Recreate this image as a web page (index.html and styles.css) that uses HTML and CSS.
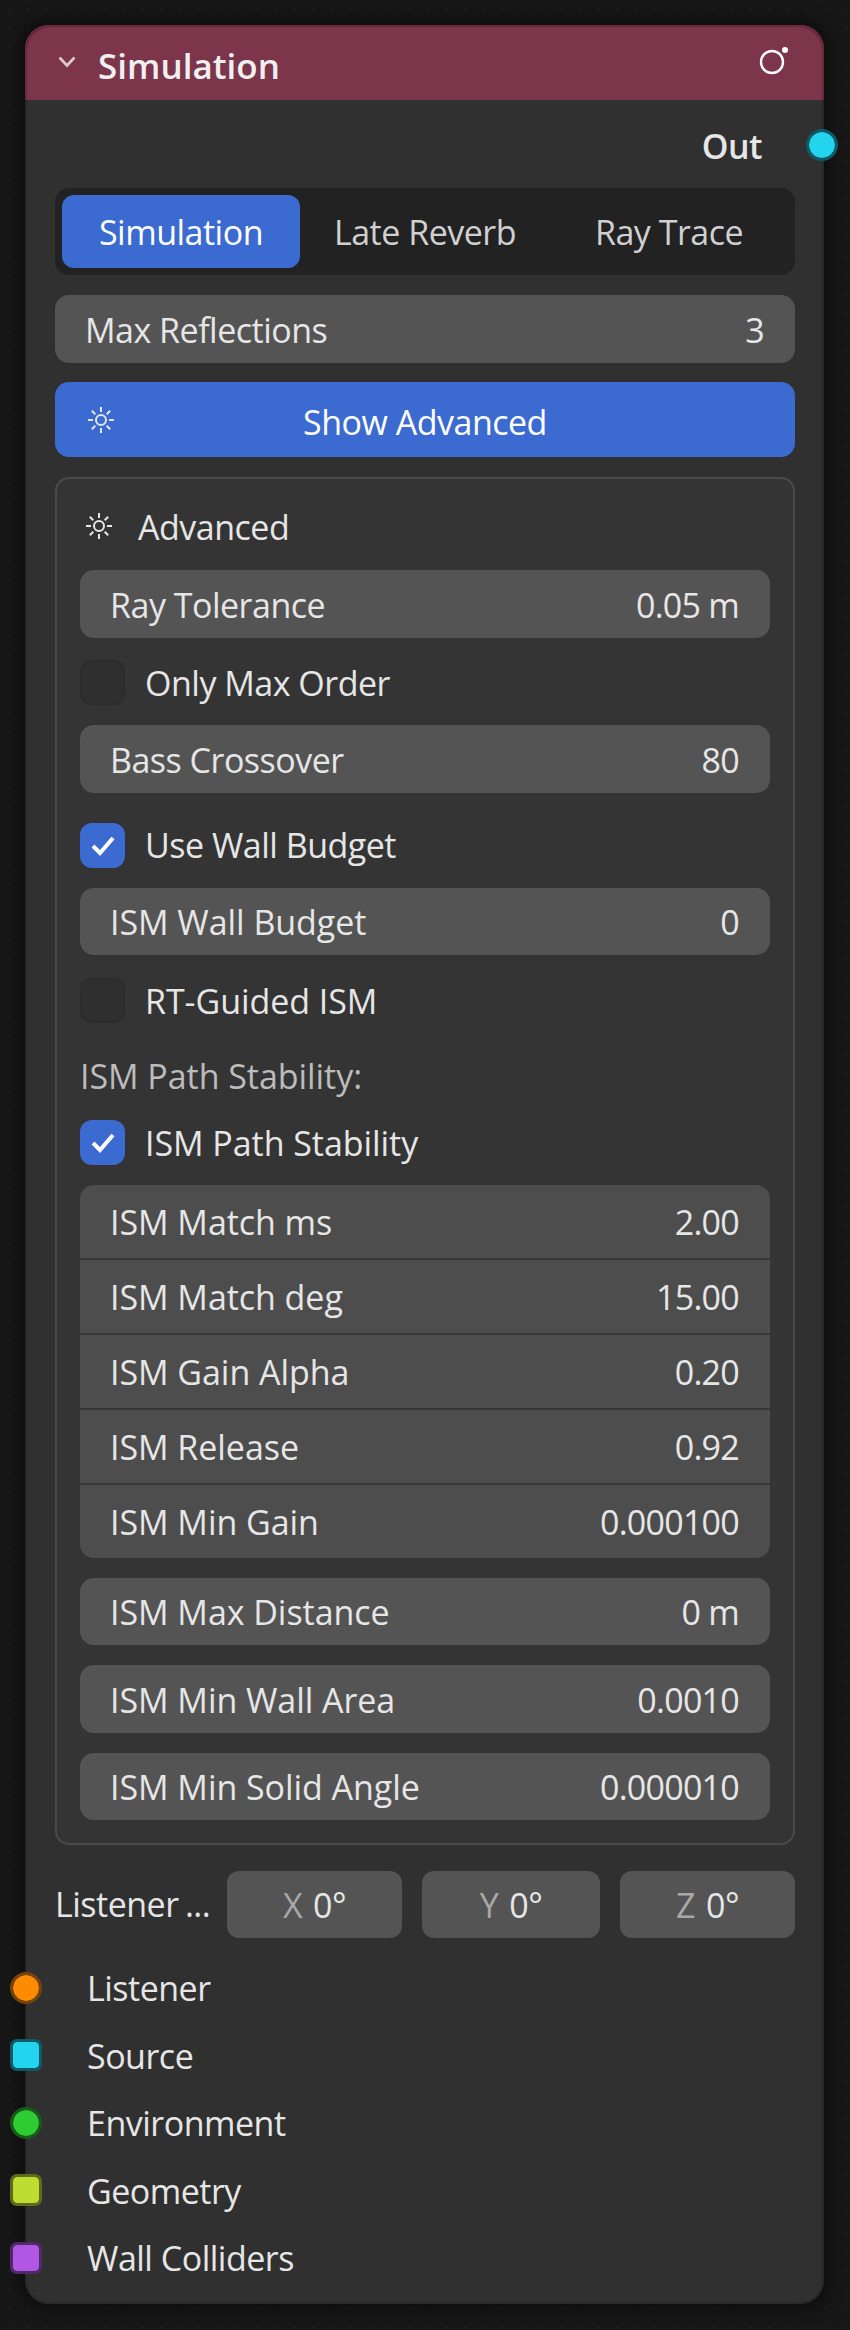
FILE: index.html
```html
<!DOCTYPE html>
<html>
<head>
<meta charset='utf-8'>
<title>Simulation node</title>
<link rel="stylesheet" href="styles.css">
</head>
<body>

<div class=node>
	<div class=node-head>
		<svg class=chevron viewBox="0 0 18 12"><polyline points="1.5,1.5 9,9.5 16.5,1.5"/></svg>
		<span class=node-title>Simulation</span>
		<svg class=node-icon viewBox="0 0 30 30"><circle class=ring cx="13" cy="17" r="11"/><circle class=dot cx="26" cy="5" r="3"/></svg>
	</div>

	<div class=node-body>
		<div class=out-row>
			<span class=out-label>Out</span>
			<i class="socket round s-out"></i>
		</div>

		<div class=tabs>
			<div class="tab active">Simulation</div>
			<div class=tab>Late Reverb</div>
			<div class=tab>Ray Trace</div>
		</div>

		<div class="field top-field"><span>Max Reflections</span><span>3</span></div>

		<div class=toggle-btn>
			<svg class=sun viewBox="0 0 28 28"><use href="#sun"/></svg>
			<span>Show Advanced</span>
		</div>

		<div class=panel>
			<div class=panel-head>
				<svg class=sun viewBox="0 0 28 28">
					<g id=sun>
						<circle cx="14" cy="14" r="5"/>
						<path d="M14 1v5M14 22v5M1 14h5M22 14h5M4.8 4.8l3.5 3.5M19.7 19.7l3.5 3.5M4.8 23.2l3.5-3.5M19.7 8.3l3.5-3.5"/>
					</g>
				</svg>
				<span>Advanced</span>
			</div>

			<div class=field><span>Ray Tolerance</span><span>0.05 m</span></div>
			<div class="check m22"><i class=box></i>Only Max Order</div>
			<div class=field><span>Bass Crossover</span><span>80</span></div>
			<div class="check m30"><i class="box on"><svg viewBox="0 0 45 45"><polyline points="13,23 20,30 33,15"/></svg></i>Use Wall Budget</div>
			<div class=field><span class=ism>ISM Wall Budget</span><span>0</span></div>
			<div class="check m23 ism"><i class=box></i>RT-Guided ISM</div>
			<div class="section-label ism">ISM Path Stability:</div>
			<div class="check m22 ism"><i class="box on"><svg viewBox="0 0 45 45"><polyline points="13,23 20,30 33,15"/></svg></i>ISM Path Stability</div>

			<div class=group>
				<div class=row><span class=ism>ISM Match ms</span><span>2.00</span></div>
				<div class=row><span class=ism>ISM Match deg</span><span>15.00</span></div>
				<div class=row><span class=ism>ISM Gain Alpha</span><span>0.20</span></div>
				<div class=row><span class=ism>ISM Release</span><span>0.92</span></div>
				<div class=row><span class=ism>ISM Min Gain</span><span>0.000100</span></div>
			</div>

			<div class=field><span class=ism>ISM Max Distance</span><span>0 m</span></div>
			<div class=field><span class=ism>ISM Min Wall Area</span><span>0.0010</span></div>
			<div class=field><span class=ism>ISM Min Solid Angle</span><span>0.000010</span></div>
		</div>

		<div class=vector>
			<span class=vector-label>Listener ...</span>
			<div class=axis><b>X</b> 0°</div>
			<div class="axis wide"><b>Y</b> 0°</div>
			<div class=axis><b>Z</b> 0°</div>
		</div>

		<div class=inputs>
			<div class=input><i class="socket round s-orange"></i>Listener</div>
			<div class=input><i class="socket s-cyan"></i>Source</div>
			<div class=input><i class="socket round s-green"></i>Environment</div>
			<div class=input><i class="socket s-yellow"></i>Geometry</div>
			<div class=input><i class="socket s-purple"></i>Wall Colliders</div>
		</div>
	</div>
</div>

</body>
</html>
```
FILE: styles.css
```css
html, body {
	margin: 0;
	height: 2330px;
	overflow: hidden;
}

body {
	background-color: #171717;
	background-image: radial-gradient(#1f1f1f 1px, transparent 1.5px);
	background-size: 19px 19px;
	font-family: "Open Sans", "Noto Sans", sans-serif;
	font-size: 34px;
	letter-spacing: -0.5px;
	color: #e6e6e6;
}

.ism {
	letter-spacing: -0.05px;
}

.node {
	box-sizing: border-box;
	width: 799px;
	margin: 25px 0 0 25px;
	border-radius: 24px;
	box-shadow: 0 0 14px 6px #0e0e0e;
	background: #303030;
}

.node-head {
	display: flex;
	align-items: center;
	height: 75px;
	padding: 2px 33px 0;
	box-sizing: border-box;
	background: #7c354a;
	border-radius: 24px 24px 0 0;
	box-shadow: inset 2px 2px 0 #662a3c, inset -2px 2px 0 #662a3c;
}

.chevron {
	width: 18px;
	height: 12px;
	margin-right: 22px;
	margin-top: -4px;
	fill: none;
	stroke: #dccbd0;
	stroke-width: 2.6;
}

.node-title {
	flex: 1;
	font-size: 35px;
	font-weight: 600;
	letter-spacing: 0;
	color: #f0f0f0;
	padding-top: 4px;
}

.node-icon {
	width: 30px;
	height: 30px;
	margin-right: 2px;
	margin-top: -8px;
}
.ring { fill: none; stroke: #fff; stroke-width: 2.4; }
.dot { fill: #fff; }

.node-body {
	padding: 12px 29px 11.5px 30px;
	border-radius: 0 0 24px 24px;
	box-shadow: inset 2px 0 0 #282828, inset -2px 0 0 #282828, inset 0 -2px 0 #282828;
}

.out-row {
	position: relative;
	display: flex;
	justify-content: flex-end;
	align-items: center;
	height: 66px;
	padding-right: 33px;
	margin-bottom: 10px;
}
.out-label { font-weight: 600; padding-top: 2px; }

.socket {
	position: absolute;
	box-sizing: border-box;
	width: 32px;
	height: 32px;
	border: 3px solid;
	border-radius: 7px;
	background-clip: padding-box;
}
.round { border-radius: 50%; }

.s-out { right: -43px; top: 17px; background-color: #22d4ed; border-color: #0f5a66; }
.s-orange { background-color: #ff8b00; border-color: #754409; }
.s-cyan { background-color: #22d4ed; border-color: #0f5a66; }
.s-green { background-color: #2ecc33; border-color: #185c1b; }
.s-yellow { background-color: #bfdc33; border-color: #5f6b1a; }
.s-purple { background-color: #b058e3; border-color: #502a66; }

.tabs {
	display: grid;
	grid-template-columns: 238px 250px 1fr;
	height: 87px;
	padding: 7px;
	box-sizing: border-box;
	background: #222;
	border-radius: 14px;
}
.tab {
	display: flex;
	align-items: center;
	justify-content: center;
	color: #d0d0d0;
}
.tab.active {
	background: #3b6ad1;
	border-radius: 12px;
	color: #fff;
}

.field, .row {
	display: flex;
	justify-content: space-between;
	align-items: center;
	padding: 2px 31px 0 30px;
	box-sizing: border-box;
}
.field span:last-child, .row span:last-child {
	letter-spacing: -0.75px;
}
.field {
	height: 67.5px;
	margin-top: 20px;
	background: #545454;
	border-radius: 14px;
}
.top-field {
	height: 68px;
}

.toggle-btn {
	position: relative;
	display: flex;
	align-items: center;
	justify-content: center;
	height: 75px;
	padding-top: 5px;
	box-sizing: border-box;
	margin-top: 19px;
	background: #3b6ad1;
	border-radius: 14px;
	color: #fff;
}
.toggle-btn .sun {
	position: absolute;
	left: 32px;
	top: 24px;
}

.sun {
	width: 28px;
	height: 28px;
	fill: none;
	stroke: #e6e6e6;
	stroke-width: 2;
}

.panel {
	margin-top: 20px;
	padding: 0 23px 22.5px;
	border: 2px solid #4a4a4a;
	border-radius: 14px;
	background: #343434;
}

.panel-head {
	display: flex;
	align-items: center;
	height: 91px;
	padding-top: 4px;
	box-sizing: border-box;
}
.panel-head .sun { margin-right: 25px; margin-left: 5px; margin-top: -2px; }
.panel-head + .field { margin-top: 0; height: 68px; }

.check {
	display: flex;
	align-items: center;
	height: 45px;
}
.m22 { margin-top: 22px; }
.m23 { margin-top: 23px; }
.m30 { margin-top: 30px; }

.box {
	width: 45px;
	height: 45px;
	margin-right: 20px;
	border-radius: 12px;
	background: #2f2f2f;
	box-shadow: inset 0 0 3px #262626;
}
.box.on {
	background: #3b6ad1;
	box-shadow: none;
}
.box svg {
	display: block;
	fill: none;
	stroke: #fff;
	stroke-width: 4;
}

.section-label {
	display: flex;
	align-items: center;
	height: 45px;
	margin-top: 30px;
	color: #bcbcbc;
}

.group {
	display: flex;
	flex-direction: column;
	gap: 2px;
	height: 372.5px;
	margin-top: 20px;
	background: #383838;
	border-radius: 14px;
	overflow: hidden;
}
.row {
	flex: 1;
	background: #4d4d4d;
}

.vector {
	display: grid;
	grid-template-columns: 152px 175px 178px 175px;
	column-gap: 20px;
	height: 67.5px;
	margin-top: 26px;
	align-items: center;
}
.vector-label {
	white-space: nowrap;
	word-spacing: -2px;
}
.axis {
	display: flex;
	align-items: center;
	justify-content: center;
	gap: 11px;
	height: 100%;
	padding-top: 1px;
	box-sizing: border-box;
	background: #545454;
	border-radius: 12px;
}
.axis b {
	font-weight: 400;
	color: #a8a8a8;
}

.inputs {
	margin-top: 16.5px;
}
.input {
	position: relative;
	display: flex;
	align-items: center;
	height: 67.5px;
	padding-left: 32px;
}
.input .socket {
	left: -45px;
	top: 17px;
}
```
